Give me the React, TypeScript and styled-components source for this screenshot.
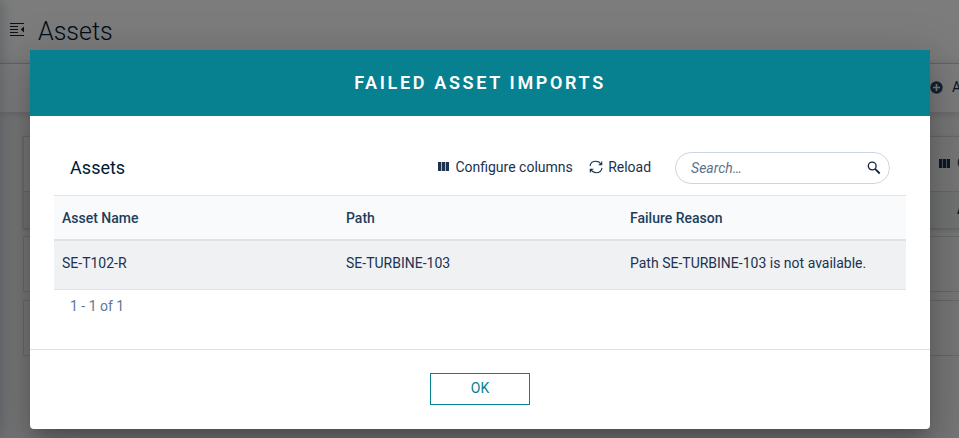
import React from "react";
import styled, { createGlobalStyle } from "styled-components";

const GlobalStyle = createGlobalStyle`
  * { box-sizing: border-box; }
  body { margin: 0; overflow: hidden; font-family: Roboto, sans-serif; font-size: 14px; color: #1b3350; }
  svg { flex-shrink: 0; }
`;

const Page = styled.div`
  position: relative;
  width: 959px;
  height: 438px;
  overflow: hidden;
  background: #eeeeef;
`;

const SidebarShadow = styled.div`
  position: absolute;
  top: 0;
  left: -10px;
  width: 10px;
  height: 100%;
  box-shadow: 0 0 14px rgba(20, 45, 70, 0.35);
`;

const PageHeader = styled.header`
  display: flex;
  align-items: center;
  gap: 14px;
  height: 64px;
  padding-left: 10px;
  background: #f8f8f8;
  border-bottom: 1px solid #d0d3d8;
`;

const MenuIcon = styled.svg`
  width: 14px;
  height: 14px;
  margin-top: -3px;
`;

const PageTitle = styled.h1`
  margin: 0;
  font-size: 25px;
  line-height: 30px;
  font-weight: 350;
  color: #001a35;
`;

const ActionBar = styled.div`
  display: flex;
  align-items: center;
  gap: 9px;
  height: 48px;
  padding: 0 0 2px 930px;
  background: #f8f8f8;
  box-shadow: 0 1px 8px rgba(20, 45, 70, 0.18);
  white-space: nowrap;
`;

const Cards = styled.main`
  display: flex;
  flex-direction: column;
  width: 970px;
  padding: 24px 0 0 23px;
`;

const TableCard = styled.section`
  height: 93px;
  border: 1px solid #cdd1d5;
  box-shadow: 0 1px 3px rgba(0, 0, 0, 0.15);
  margin-bottom: 7px;
`;

const CardTools = styled.div`
  display: flex;
  align-items: center;
  gap: 7px;
  height: 55px;
  padding: 0 0 2px 915px;
  border-bottom: 1px solid #cdd1d5;
`;

const CardHeading = styled.div`
  height: 36px;
  padding: 9px 0 0 933px;
  font-weight: 700;
  background: #e5e8e8;
`;

const RowCard = styled.div`
  height: 56px;
  margin-bottom: 8px;
  border: 1px solid #cdd1d5;
`;

const Overlay = styled.div`
  position: absolute;
  inset: 0;
  display: flex;
  justify-content: center;
  align-items: flex-start;
  padding-top: 50px;
  background: rgba(0, 0, 0, 0.5);
`;

const Dialog = styled.section`
  width: 900px;
  height: 379px;
  display: flex;
  flex-direction: column;
  background: #fff;
  border-radius: 0 0 4px 4px;
  box-shadow: 0 11px 15px -7px rgba(0, 0, 0, 0.2), 0 24px 38px 3px rgba(0, 0, 0, 0.14), 0 9px 46px 8px rgba(0, 0, 0, 0.12);
`;

const DialogTitle = styled.h2`
  display: flex;
  align-items: center;
  justify-content: center;
  height: 66px;
  margin: 0;
  padding: 0 0 2px 1px;
  background: #078090;
  color: #fff;
  font-size: 18px;
  font-weight: 600;
  letter-spacing: 2.65px;
`;

const DialogBody = styled.div`
  flex: 1;
  padding: 24px 24px 0;
`;

const Toolbar = styled.div`
  display: flex;
  align-items: center;
  height: 55px;
  padding: 0 16px;
`;

const TableTitle = styled.h3`
  flex: 1;
  margin: 0;
  font-size: 18px;
  line-height: 22px;
  font-weight: 400;
  padding-left: 0.6px;
  color: #001a35;
`;

const ToolButton = styled.button<{ $gap: number; $after: number }>`
  display: flex;
  align-items: center;
  gap: ${(p) => p.$gap}px;
  margin: 0 ${(p) => p.$after}px 1px 0;
  padding: 0;
  border: 0;
  background: none;
  color: #1b3350;
  font: 400 14px/20px Roboto, sans-serif;

  svg { margin-bottom: 1px; }
`;

const SearchBox = styled.label`
  display: flex;
  align-items: center;
  justify-content: space-between;
  width: 215px;
  height: 32px;
  padding: 0 8px 0 15px;
  border: 1px solid #cdd5df;
  border-radius: 16px;
`;

const SearchInput = styled.input`
  width: 150px;
  padding: 0 0 0 0.6px;
  border: 0;
  outline: 0;
  background: none;
  font: italic 400 14px/20px Roboto, sans-serif;
  &::placeholder { color: #5c7288; opacity: 1; }
`;

const Table = styled.table`
  width: 100%;
  border-collapse: separate;
  border-spacing: 0;
  table-layout: fixed;
`;

const HeadCell = styled.th`
  height: 46px;
  padding: 0 8px 0 8.5px;
  text-align: left;
  font-size: 14px;
  font-weight: 530;
  color: #223d5b;
  background: #f9fafc;
  border-top: 1px solid #dfe2e7;
  border-bottom: 2px solid #dfe2e7;
`;

const Cell = styled.td`
  height: 49px;
  padding: 0 8px 4px 8.5px;
  font-size: 14px;
  background: #f0f1f3;
  border-bottom: 1px solid #dfe2e7;
`;

const Pagination = styled.div`
  padding: 6px 16px 0 16.5px;
  line-height: 20px;
  color: #5c7898;
`;

const DialogFooter = styled.footer`
  display: flex;
  justify-content: center;
  height: 80px;
  padding-top: 23px;
  border-top: 1px solid #dedfe2;
`;

const OkButton = styled.button`
  width: 100px;
  height: 32px;
  padding: 0 0 2px 1px;
  border: 1px solid #078090;
  background: #fff;
  color: #078090;
  font: 400 14px/20px Roboto, sans-serif;
`;

const ColumnsIcon = () => (
  <svg width="11" height="9" viewBox="0 0 11 9" fill="#1b3350">
    <path d="M0 0h3v9H0zM4 0h3v9H4zM8 0h3v9H8z" />
    <path d="M3 0h1v9H3zM7 0h1v9H7z" opacity="0.35" />
  </svg>
);

const ReloadIcon = () => (
  <svg width="14" height="14" viewBox="0 0 14 14" fill="none" stroke="#1b3350" strokeWidth="1.1">
    <path d="M1 6.2C1.4 3.3 3.9 1.3 6.9 1.3c2.2 0 4 1 5.2 3.2M12.7 1.6v3.2H9.6M13 7.8c-.4 2.9-2.9 4.9-5.9 4.9-2.2 0-4-1-5.2-3.2M1.3 12.4V9.2H4.4" />
  </svg>
);

const SearchIcon = () => (
  <svg width="14" height="14" viewBox="0 0 14 14" fill="none" stroke="#10233c">
    <circle cx="5.2" cy="5" r="3.9" strokeWidth="1.3" />
    <path d="M8.1 7.9l4.6 4.6" strokeWidth="1.8" />
  </svg>
);

const AddIcon = () => (
  <svg width="13" height="13" viewBox="0 0 13 13">
    <circle cx="6.5" cy="6.5" r="6.2" fill="#29466a" />
    <path d="M6.5 3v7M3 6.5h7" stroke="#f8f8f8" strokeWidth="1.6" />
  </svg>
);

const columns = ["Asset Name", "Path", "Failure Reason"];
const failures = [["SE-T102-R", "SE-TURBINE-103", "Path SE-TURBINE-103 is not available."]];

export default function App() {
  return (
    <Page>
      <GlobalStyle />
      <PageHeader>
        <MenuIcon viewBox="0 0 14 14" fill="none" stroke="#10233c">
          <path d="M0 .5h14M0 3.5h8M0 6.5h8M0 9.5h8M0 12.5h14" />
          <path d="M14 3.5v6L10.8 6.5z" fill="#10233c" stroke="none" />
        </MenuIcon>
        <PageTitle>Assets</PageTitle>
      </PageHeader>
      <ActionBar><AddIcon />Add</ActionBar>
      <Cards>
        <TableCard>
          <CardTools><ColumnsIcon />Configure</CardTools>
          <CardHeading>Asset</CardHeading>
        </TableCard>
        <RowCard />
        <RowCard />
      </Cards>
      <SidebarShadow />
      <Overlay>
        <Dialog role="dialog" aria-label="Failed asset imports">
          <DialogTitle>FAILED ASSET IMPORTS</DialogTitle>
          <DialogBody>
            <Toolbar>
              <TableTitle>Assets</TableTitle>
              <ToolButton $gap={6.5} $after={16.4}><ColumnsIcon />Configure columns</ToolButton>
              <ToolButton $gap={5} $after={23.4}><ReloadIcon />Reload</ToolButton>
              <SearchBox>
                <SearchInput placeholder="Search…" />
                <SearchIcon />
              </SearchBox>
            </Toolbar>
            <Table>
              <thead>
                <tr>{columns.map((c) => <HeadCell key={c}>{c}</HeadCell>)}</tr>
              </thead>
              <tbody>
                {failures.map((row) => (
                  <tr key={row[0]}>{row.map((v) => <Cell key={v}>{v}</Cell>)}</tr>
                ))}
              </tbody>
            </Table>
            <Pagination>1 - 1 of 1</Pagination>
          </DialogBody>
          <DialogFooter><OkButton>OK</OkButton></DialogFooter>
        </Dialog>
      </Overlay>
    </Page>
  );
}
